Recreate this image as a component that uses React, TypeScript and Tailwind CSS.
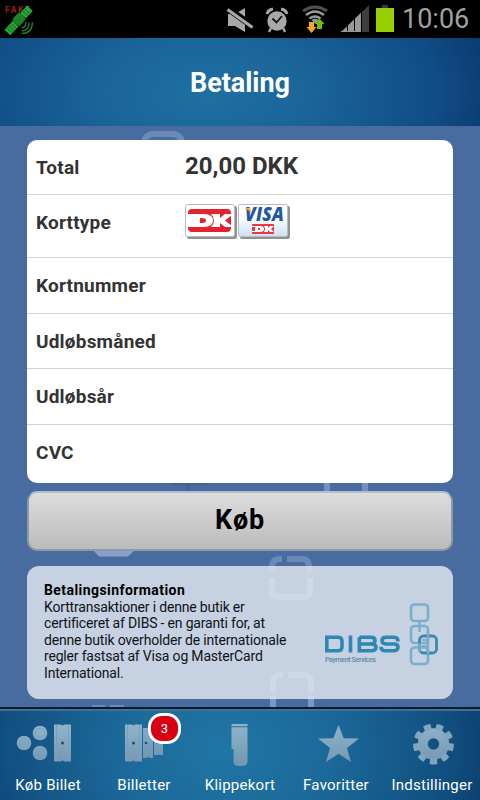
import type { ReactNode } from "react";

const fields = [
  { label: "Kortnummer", style: "h-[56px] pt-[1px]" },
  { label: "Udløbsmåned", style: "h-[55px] pt-[2px]" },
  { label: "Udløbsår", style: "h-[56px] pt-[1px]" },
  { label: "CVC", style: "h-[59px] pb-[2px]" },
];

const SatelliteIcon = () => (
  <svg width="36" height="38" viewBox="0 0 36 38">
    <text x="5" y="13" fontSize="8.500" fontWeight="700" fill="#9b2018" textLength="25">
      FAKE
    </text>
    <g transform="rotate(-47 19 20)">
      <rect x="2" y="16" width="12" height="8" fill="#27a835" />
      <path d="M5 16v8M8 16v8M11 16v8" stroke="#177321" strokeWidth="1" />
      <rect x="14" y="14.500" width="11" height="10" rx="2.500" fill="#1b8226" />
      <rect x="25" y="16" width="10" height="8" fill="#27a835" />
      <path d="M28 16v8M31 16v8" stroke="#177321" strokeWidth="1" />
    </g>
    <path
      d="M22 28q4-1 4-6M22 31q7-.5 7-8.500M22 33.500q10 0 10.500-11"
      fill="none"
      stroke="#1e8a2a"
      strokeWidth="1.300"
    />
  </svg>
);

const MuteIcon = () => (
  <svg width="28" height="26" viewBox="0 0 28 26" fill="#a8a8a8">
    <path d="M2 7h7l10-6v24L9 19H2z" />
    <path d="M2 1.500L27 19.500" stroke="#000" strokeWidth="6.500" />
    <path d="M1.500 2.500L26.500 20.500" stroke="#a8a8a8" strokeWidth="3.200" />
  </svg>
);

const AlarmIcon = () => (
  <svg width="24" height="26" viewBox="0 0 24 26" fill="none" stroke="#a8a8a8">
    <circle cx="12" cy="14" r="9.700" fill="#a8a8a8" stroke="none" />
    <path d="M2 7q1-4 6-5M22 7q-1-4-6-5" strokeWidth="3" />
    <path d="M6 21l-2 4M18 21l2 4" strokeWidth="2.400" />
    <path d="M7.500 11.500l4 4L17 9" stroke="#111" strokeWidth="1.800" />
  </svg>
);

const WifiIcon = () => (
  <svg width="26" height="28" viewBox="0 0 26 28" fill="none">
    <path d="M1 6q12-8 24 0" stroke="#505050" strokeWidth="3" />
    <path d="M4 10q9-7 18 0" stroke="#999" strokeWidth="2.500" />
    <path d="M7.500 13.500q5.500-4 11 0" stroke="#999" strokeWidth="2.400" />
    <path d="M9.500 15q3.500-2.500 7 0l-3.500 3.500z" fill="#999" />
    <path d="M7 17h5v5h2.500L9.500 28 4.500 22H7z" fill="#f7a42a" />
    <path d="M15 24v-5h-2.500L17.500 13.500l5 5.500H20v5z" fill="#76bd0a" />
  </svg>
);

const SignalIcon = () => (
  <svg width="29" height="27" viewBox="0 0 29 27">
    <path d="M0 27l6-5.700V27zM7 27v-6.700l6-5.700V27zM14 27V13.600l6-5.800V27z" fill="#999" />
    <path d="M21 27V7l7-7v27z" fill="#3e3e3e" />
    <path d="M0 26.500h20" stroke="#999" strokeWidth="1" />
  </svg>
);

const StatusBar = () => (
  <div className="relative h-[38px] bg-black">
    <div className="absolute left-0 top-0">
      <SatelliteIcon />
    </div>
    <div className="flex h-[38px] items-start pl-[226px]">
      <div className="mt-[7px] w-[39px]"><MuteIcon /></div>
      <div className="mt-[7px] w-[37px]"><AlarmIcon /></div>
      <div className="mt-[5px] w-[39px]"><WifiIcon /></div>
      <div className="mt-[5px] w-[35px]"><SignalIcon /></div>
      <div className="mt-[5px] flex w-[18px] flex-col items-center">
        <span className="h-[3px] w-[6px] bg-[#3b3b3b]" />
        <span className="h-[24px] w-[18px] bg-[#95cf04]" />
      </div>
      <span className="ml-[8px] mt-[4px] text-[27px] leading-[30px] text-[#a0a0a0]">10:06</span>
    </div>
  </div>
);

/* Faded chain links behind the content */
const Backdrop = () => (
  <svg
    className="absolute left-0 top-[126px]"
    width="480"
    height="582"
    viewBox="0 126 480 582"
    fill="none"
    stroke="#7c97c2"
    strokeWidth="6"
  >
    <rect x="144" y="134" width="38" height="38" rx="9" stroke="#6c8ab8" />
    <path d="M327 480v14M365 480v14" stroke="#7690bd" />
    <path d="M93 550l6 6.500h29l7-6.500z" fill="#8a9fc7" stroke="none" />
    <path d="M272 572v-5q0-8 8-8h2M287 559h15q7 0 7 8v5" stroke="#6c88b7" />
    <path d="M272 578v13q0 6 7 6h24q7 0 7-6v-13" />
    <path d="M273 692v-9q0-8 8-8h2M288 675h15q8 0 8 8v9M273 696v12M311 696v12" />
    <path d="M92 706.500h13M110 706.500h14" strokeWidth="3" stroke="#6d89b7" />
    <path d="M172 484h35M188 484v6" stroke="#436394" strokeWidth="3" />
  </svg>
);

const DankortCard = () => (
  <svg width="53" height="36" viewBox="0 0 53 36">
    <rect x="2" y="2" width="50" height="33" rx="2" fill="#929292" />
    <rect x=".5" y=".5" width="49" height="32" rx="2" fill="#fff" stroke="#bbb" />
    <path d="M7 5h35q4 0 4 4v15q0 4-4 4H7q-4 0-4-4v-1h6V10H3V9q0-4 4-4z" fill="#e3232e" />
    <path
      fillRule="evenodd"
      d="M3 10h16q9 0 9 6.500T19 23H3v-2h6v-9H3zM15 14v5h2q4 0 4-2.500T17 14z"
      fill="#fff"
    />
    <path d="M26 10h9v4l5-4h7v1l-7 5.500 7 5.500v1h-7l-5-4v4h-9q3-3 3-6.500t-3-6.500z" fill="#fff" />
  </svg>
);

const VisaCard = () => (
  <svg className="overflow-visible" width="53" height="36" viewBox="0 0 53 36">
    <defs>
      <linearGradient id="visa" x1="0" y1="0" x2="0" y2="1">
        <stop offset=".4" stopColor="#fff" />
        <stop offset="1" stopColor="#cbdff5" />
      </linearGradient>
    </defs>
    <rect x="2" y="2" width="50" height="33" rx="2" fill="#929292" />
    <rect x=".5" y=".5" width="49" height="32" rx="2" fill="url(#visa)" stroke="#bbb" />
    <text
      x="7"
      y="17"
      fontSize="18.500"
      fontWeight="800"
      fontStyle="italic"
      fill="#22589f"
      fontFamily="Open Sans, sans-serif"
      textLength="39"
      lengthAdjust="spacingAndGlyphs"
    >
      VISA
    </text>
    <path d="M6 4h6l1.500 5q-3-3.500-7.500-5z" fill="#eeb34c" />
    <rect x="14" y="20" width="22" height="10" rx="1" fill="#e33a43" />
    <path
      fillRule="evenodd"
      d="M14 22h8q4 0 4 3t-4 3h-8v-1h3v-4h-3zM20 24v2h2v-2zM26 22h4v2l2-2h4l-3 3 3 3h-4l-2-2v2h-4q2-3 0-6z"
      fill="#fff"
    />
  </svg>
);

const DibsLogo = () => (
  <svg width="116" height="66" viewBox="0 0 116 66" fill="none">
    <g stroke="#2f87b5" strokeWidth="3.600">
      <path d="M2.800 35.300H14q4 0 4 4v5.400q0 4-4 4H2.800z" />
      <path d="M26.500 33.500v17" />
      <path d="M35.300 35.300H47q4 0 4 3.300T47 42H36M47 42q5 0 5 3.300t-4 3.400H35.300V35.300" />
      <path d="M74 39.500q0-4.200-4-4.200h-8q-4 0-4 3.300t4 3.400h8q4 0 4 3.300T70 48.700h-9q-4 0-4-4" />
    </g>
    <text x="1" y="60" fontSize="7.200" fontWeight="500" fill="#5c8ca9" textLength="51">
      Payment Services
    </text>
    <g stroke="#78b0cb" strokeWidth="2.600">
      <rect x="87" y="2.500" width="17" height="16.500" rx="3.500" />
      <rect x="87" y="24" width="17" height="17" rx="3.500" />
      <rect x="87" y="45.500" width="17" height="16.500" rx="3.500" />
    </g>
    <rect x="95.500" y="34" width="17" height="17" rx="4" stroke="#3b89b0" strokeWidth="2.800" />
    <path d="M95.500 19v11M95.500 41v9M104 32v20" stroke="#78b0cb" strokeWidth="2.400" />
    <path d="M98 38h6M98 44h6" stroke="#78b0cb" strokeWidth="2" />
  </svg>
);

const IconFill = ({ id }: { id: string }) => (
  <defs>
    <linearGradient id={id} x1="0" y1="18" x2="0" y2="60" gradientUnits="userSpaceOnUse">
      <stop stopColor="#8fb4ca" />
      <stop offset="1" stopColor="#7294b0" />
    </linearGradient>
  </defs>
);

const TicketIcon = () => (
  <svg width="96" height="70" viewBox="0 2 96 70" fill="url(#f1)">
    <IconFill id="f1" />
    <circle cx="24" cy="36" r="7.300" />
    <circle cx="40" cy="26" r="7.300" />
    <circle cx="40" cy="46" r="7.300" />
    <g fill="none" stroke="#7a9fb9" strokeWidth=".8">
      <circle cx="24" cy="36" r="4.700" />
      <circle cx="40" cy="26" r="4.700" />
      <circle cx="40" cy="46" r="4.700" />
    </g>
    <path d="M54 17.500h7q1.500 2 3 0h7v37h-7q-1.500-2-3 0h-7z" />
    <path d="M56.500 18v36M68.500 18v36" stroke="#7da0b9" />
    <circle cx="62.500" cy="36" r="1.500" fill="#155178" />
  </svg>
);

const TicketsIcon = () => (
  <svg width="96" height="70" viewBox="0 2 96 70" fill="url(#f2)">
    <IconFill id="f2" />
    <path d="M29 17.500h7q1.500 2 3 0h7v37h-7q-1.500-2-3 0h-7z" />
    <path d="M31.500 18v36M43.500 18v36" stroke="#7da0b9" />
    <path d="M47 21h10v30h-3q-1.500-2-3 0h-4zM58 25h9v23h-3q-1-1-2 0h-4z" opacity=".9" />
    <circle cx="37.500" cy="36" r="1.500" fill="#155178" />
    <circle cx="50" cy="36" r="1.300" fill="#155178" />
    <circle cx="61.500" cy="36" r="1" fill="#155178" />
  </svg>
);

const CardIcon = () => (
  <svg width="96" height="70" viewBox="0 2 96 70" fill="url(#f3)">
    <IconFill id="f3" />
    <path d="M39.500 17h16v2.200h-16zM39.500 20.200h16V54q0 5-5 5h-4q-5 0-5-5V42h-2z" />
  </svg>
);

const StarIcon = () => (
  <svg width="96" height="70" viewBox="0 2 96 70" fill="url(#f4)">
    <IconFill id="f4" />
    <path d="M50.500 18l5.200 13.300 15.300.3-12 9.400 4 14-12.500-8.200-12.500 8.200 4-14-12-9.400 15.300-.3z" />
  </svg>
);

const GearIcon = () => (
  <svg width="96" height="70" viewBox="0 2 96 70" fill="url(#f5)">
    <IconFill id="f5" />
    <circle cx="49.500" cy="37" r="10.700" strokeWidth="10" fill="none" stroke="url(#f5)" />
    {[-110, -70, -30, 10, 50, 90, 130, 170, 210].map((a) => (
      <path
        key={a}
        d="M64 33.500l5.500-.3q1 3.800 0 7.600l-5.500-.3z"
        fill="#82a5bd"
        transform={`rotate(${a} 49.500 37)`}
      />
    ))}
  </svg>
);

const Tab = ({ label, icon, badge }: { label: string; icon: ReactNode; badge?: string }) => (
  <div className="relative flex w-[96px] flex-col items-center">
    <div className="h-[66px]">{icon}</div>
    <span className="whitespace-nowrap text-[15px] leading-[20px] tracking-[0.25px] text-white">
      {label}
    </span>
    {badge && (
      <span className="absolute left-[52px] top-[4px] flex h-[31px] w-[33px] items-center justify-center rounded-[14px] border-[3px] border-white bg-[#d80012] text-[13px] text-white">
        {badge}
      </span>
    )}
  </div>
);

const App = () => {
  return (
    <div className="relative h-[800px] w-[480px] overflow-hidden bg-[#486c9f] font-[Roboto,sans-serif]">
      <Backdrop />
      <div className="relative flex h-full flex-col">
        <StatusBar />
        <header className="flex h-[88px] items-center justify-center bg-[radial-gradient(ellipse_310px_170px_at_205px_55px,#1f70a1_0%,#1a649a_35%,#104c86_75%,#0a3668_100%)] pt-[2px]">
          <h1 className="text-[27px] font-bold tracking-[-0.05px] text-white">Betaling</h1>
        </header>

        <main className="flex h-[581px] flex-col px-[27px] pt-[14px]">
          <section className="h-[343px] rounded-[10px] bg-white text-[19px] font-bold tracking-[0.2px] text-[#333]">
            <div className="flex h-[55px] items-center border-b border-[#d4d4d4] pl-[9px]">
              <span className="w-[149px] pt-[2px]">Total</span>
              <span className="pb-[3px] text-[24px] tracking-normal">20,00 DKK</span>
            </div>
            <div className="flex h-[63px] items-start border-b border-[#d4d4d4] pl-[9px]">
              <span className="w-[149px] pt-[14px] leading-[28px]">Korttype</span>
              <div className="flex pt-[9px]">
                <DankortCard />
                <VisaCard />
              </div>
            </div>
            {fields.map((field) => (
              <div
                key={field.label}
                className={`flex items-center border-b border-[#d4d4d4] pl-[9px] last:border-0 ${field.style}`}
              >
                {field.label}
              </div>
            ))}
          </section>

          <button className="mt-[8px] h-[60px] rounded-[10px] border-2 border-[#8f98a6] border-t-[#b3bccb] bg-linear-to-b from-[#dedede] to-[#bababa] bg-origin-border pb-[2px] text-[27px] font-bold tracking-[0.8px] text-black">
            Køb
          </button>

          <section className="mt-[15px] flex h-[133px] shrink-0 rounded-[12px] bg-[#e2e8ef]/82 pl-[17px] pt-[16px] text-[14px] leading-[16.500px] text-[#101318]">
            <div className="w-[280px] whitespace-nowrap">
              <h2 className="font-bold tracking-[0.43px] text-black">Betalingsinformation</h2>
              <p className="tracking-[-0.18px]">
                Korttransaktioner i denne butik er
                <br />
                certificeret af DIBS - en garanti for, at
                <br />
                denne butik overholder de internationale
                <br />
                regler fastsat af Visa og MasterCard
                <br />
                International.
              </p>
            </div>
            <div className="pt-[20px]">
              <DibsLogo />
            </div>
          </section>
        </main>

        <nav className="flex h-[93px] border-t-2 border-[#071c35] bg-[radial-gradient(ellipse_310px_220px_at_225px_40px,#2076a4_0%,#1b6999_35%,#114f80_72%,#0a315c_100%)] shadow-[inset_0_2px_0_#45708f]">
          <Tab label="Køb Billet" icon={<TicketIcon />} />
          <Tab label="Billetter" icon={<TicketsIcon />} badge="3" />
          <Tab label="Klippekort" icon={<CardIcon />} />
          <Tab label="Favoritter" icon={<StarIcon />} />
          <Tab label="Indstillinger" icon={<GearIcon />} />
        </nav>
      </div>
    </div>
  );
};

export default App;
